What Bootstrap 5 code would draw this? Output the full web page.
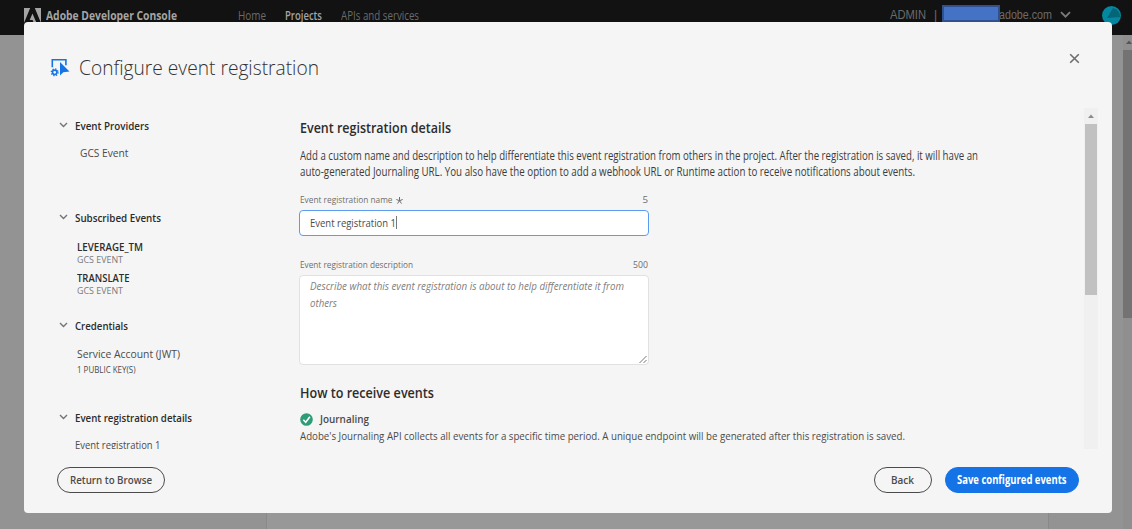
<!DOCTYPE html>
<html lang="en">
<head>
<meta charset="utf-8">
<title>Adobe Developer Console</title>
<link href="https://cdn.jsdelivr.net/npm/bootstrap@5.3.0/dist/css/bootstrap.min.css" rel="stylesheet">
<style>
body{font-family:"Open Sans","Noto Sans",sans-serif;font-size:12px;line-height:16px;background:#939393;color:#4b4b4b;height:529px;overflow:hidden;white-space:nowrap}
[data-w]{display:inline-block;transform-origin:0 50%}
.topbar{height:35px;background:#121212;color:#6b6b6b;padding-left:24px;line-height:18px}
.topbar .account{font-family:"Liberation Sans",sans-serif;font-size:12px}
.brand-name{color:#a5a5a5;font-weight:700;font-size:12px}
.redacted{width:58px;height:17px;background:#4472c4;border:2px solid #2f528f;margin:-1px -1px 0 0;position:relative;z-index:1}
.page-column{left:266px;top:35px;width:783px;bottom:0;background:#989898;border:solid #898989;border-width:0 1px}
.page-scroll{right:0;top:35px;width:9px;bottom:0;background:#8f8f8f}
.page-scroll i{display:block;height:268px;margin-top:5px;background:#737373}
.dialog{left:24px;top:22px;width:1087.5px;height:491px;background:#f5f5f5;border-radius:4px;z-index:2}
.dialog-head{height:86px;padding:31px 30.5px 0 26px}
.dialog-title{font-weight:300;font-size:21px;line-height:28px;color:#323232;margin:0}
.dialog-body{height:340.5px;overflow:hidden}
.steps{width:275.5px;padding:10px 0 0 34.5px;font-size:11px}
.step-head{font-weight:600;color:#2c2c2c;gap:7.5px;height:16px}
.evt{font-weight:600;color:#2c2c2c;line-height:14px}
.evt-sub{font-size:9px;line-height:12px;color:#7a7a7a}
.sec{font-size:14px;line-height:20px;font-weight:600;color:#2c2c2c;margin:0}
.intro{line-height:16.5px;color:#3c3c3c}
.lbl{font-size:9.8px;line-height:14px;color:#6e6e6e;width:348.5px}
.field{width:349.5px;margin-left:-.5px;border:1px solid #e1e1e1;border-radius:4px;background:#fff;padding:0 10px;font-size:11.5px}
.field.name-in{height:26px;border-color:#5c9cf0;color:#4b4b4b;padding-bottom:1px}
.field.desc-in{height:89.5px;padding-top:2px;line-height:16.5px;font-style:italic;color:#808080}
.caret{width:1px;height:13px;background:#777}
.inner-scroll{width:14px;background:#f0f0f0;margin-right:13.5px}
.inner-scroll i{display:block;width:12px;height:171px;margin:6px auto 0;background:#c1c1c1}
.dialog-foot{height:64px;padding:0 32.5px 1px 32.5px}
.pill{height:26px;border:1.5px solid #4b4b4b;border-radius:13px;color:#4b4b4b;font-size:11.5px;font-weight:600;line-height:20px;padding:0}
.pill.cta{background:#1473e6;border-color:#1473e6;color:#fff;font-weight:700}
</style>
</head>
<body class="position-relative">
<header class="topbar d-flex align-items-start">
  <svg width="17" height="15" viewBox="0 0 17 15" style="margin-top:8px"><path fill="#a5a5a5" d="M0 0h6.2L0 15zM10.800 0H17v15zM8.500 5.500l4 9.500H9.800l-1.200-3H5.700z"/></svg>
  <span class="brand-name" style="margin:7px 0 0 5px"><span data-w="131">Adobe Developer Console</span></span>
  <nav class="d-flex" style="margin:7px 0 0 61px;gap:19px"><span data-w="28">Home</span><span style="color:#a5a5a5;font-weight:600" data-w="37">Projects</span><span data-w="78">APIs and services</span></nav>
  <div class="account d-flex ms-auto" style="padding-top:6px;margin-right:11px">
    <span data-w="36">ADMIN</span><span style="margin:0 5px 0 8px">|</span><span class="redacted"></span><span data-w="53">adobe.com</span>
    <svg width="11" height="8" viewBox="0 0 11 8" style="margin:5px 31px 0 8px"><path d="M1 1.200l4.500 4.500L10 1.200" fill="none" stroke="#7b7b7b" stroke-width="1.800"/></svg>
    <svg width="19" height="19" viewBox="0 0 19 19"><circle cx="9.500" cy="9.500" r="9.500" fill="#0487a0"/><path d="M11 2L5 12l13 -1A9.500 9.500 0 0 0 11 2z" fill="#046577"/></svg>
  </div>
</header>
<div class="page-column position-absolute"></div>
<div class="page-scroll position-absolute"><svg class="d-block" width="9" height="10" viewBox="0 0 9 10"><path d="M3 9l3-3.500L9 9z" fill="#555"/></svg><i></i></div>

<main class="dialog position-absolute">
  <div class="dialog-head d-flex align-items-start">
    <svg width="20" height="20" viewBox="0 0 20 20" style="margin-top:5px"><path d="M2.300 9.200V1.800h13.600v5.500" fill="none" stroke="#1473e6" stroke-width="1.600"/><path d="M10 4v13.500l3.300-3.300 6.200-.7z" fill="#1473e6"/><circle cx="4.700" cy="14.300" r="2.200" fill="none" stroke="#1473e6" stroke-width="1.600"/><circle cx="4.700" cy="14.300" r="3.400" fill="none" stroke="#1473e6" stroke-width="1.300" stroke-dasharray="1.335"/></svg>
    <h1 class="dialog-title" style="margin-left:9px"><span data-w="240">Configure event registration</span></h1>
    <svg class="ms-auto" width="13" height="13" viewBox="0 0 13 13" style="margin-top:-1px"><path d="M2.200 2.200l8.600 8.600M10.800 2.200l-8.600 8.600" stroke="#6e6e6e" stroke-width="1.600"/></svg>
  </div>
  <div class="dialog-body d-flex">
    <aside class="steps flex-shrink-0">
      <div class="step-head d-flex"><svg width="9" height="6" viewBox="0 0 9 6" style="margin-top:4px"><path d="M1 1l3.500 3.500L8 1" fill="none" stroke="#747474" stroke-width="1.400"/></svg><span data-w="74">Event Providers</span></div>
      <div style="margin:11px 0 49px 21px"><span data-w="48.500">GCS Event</span></div>
      <div class="step-head d-flex"><svg width="9" height="6" viewBox="0 0 9 6" style="margin-top:4px"><path d="M1 1l3.500 3.500L8 1" fill="none" stroke="#747474" stroke-width="1.400"/></svg><span data-w="86">Subscribed Events</span></div>
      <div style="margin:14px 0 21px 18px">
        <div class="evt"><span data-w="66">LEVERAGE_TM</span></div><div class="evt-sub"><span data-w="46">GCS EVENT</span></div>
        <div class="evt" style="margin-top:5px"><span data-w="52.500">TRANSLATE</span></div><div class="evt-sub"><span data-w="46">GCS EVENT</span></div>
      </div>
      <div class="step-head d-flex"><svg width="9" height="6" viewBox="0 0 9 6" style="margin-top:4px"><path d="M1 1l3.500 3.500L8 1" fill="none" stroke="#747474" stroke-width="1.400"/></svg><span data-w="53">Credentials</span></div>
      <div style="margin:12px 0 32px 18px"><div><span data-w="103">Service Account (JWT)</span></div><div style="font-size:9.5px"><span data-w="58.500">1 PUBLIC KEY(S)</span></div></div>
      <div class="step-head d-flex"><svg width="9" height="6" viewBox="0 0 9 6" style="margin-top:4px"><path d="M1 1l3.500 3.500L8 1" fill="none" stroke="#747474" stroke-width="1.400"/></svg><span data-w="117">Event registration details</span></div>
      <div style="margin:11px 0 0 16px"><span data-w="85.500">Event registration 1</span></div>
    </aside>
    <section class="flex-grow-1" style="padding-top:10px;width:0">
      <h2 class="sec"><span data-w="151">Event registration details</span></h2>
      <div class="intro" style="margin-top:9.5px"><span data-w="678">Add a custom name and description to help differentiate this event registration from others in the project. After the registration is saved, it will have an</span><br><span data-w="615">auto-generated Journaling URL. You also have the option to add a webhook URL or Runtime action to receive notifications about events.</span></div>
      <div class="lbl d-flex" style="margin-top:12.5px"><span data-w="92.500">Event registration name</span><svg width="7" height="7" viewBox="0 0 7 7" style="margin:4px 0 0 4px"><path d="M3.500 0v3.700M.3 2.500l3.200 1.200 3.200-1.200M1.500 6.600l2-2.900 2 2.900" stroke="#6e6e6e" fill="none"/></svg><span class="ms-auto">5</span></div>
      <div class="field name-in d-flex align-items-center" style="margin-top:3px"><span data-w="86">Event registration 1</span><i class="caret"></i></div>
      <div class="lbl d-flex" style="margin-top:21.500px"><span data-w="113">Event registration description</span><span class="ms-auto"><span data-w="15">500</span></span></div>
      <div class="field desc-in position-relative" style="margin-top:3.500px"><span data-w="314">Describe what this event registration is about to help differentiate it from</span><br><span data-w="27">others</span>
        <svg class="position-absolute bottom-0 end-0" width="9" height="9" viewBox="0 0 9 9"><path d="M.5 8L7.500 1M4.500 8l3-3" stroke="#777"/></svg></div>
      <h2 class="sec" style="margin-top:18.500px"><span data-w="134">How to receive events</span></h2>
      <div class="d-flex align-items-center" style="margin-top:8px;font-weight:600;font-size:11.5px"><svg width="13" height="13" viewBox="0 0 13 13"><circle cx="6.500" cy="6.500" r="6.300" fill="#2d9d78"/><path d="M3.300 6.700l2.400 2.500 4.200-5.400" fill="none" stroke="#fff" stroke-width="1.600"/></svg><span style="margin-left:7px"><span data-w="49">Journaling</span></span></div>
      <div style="font-size:11.5px;margin-top:1px"><span data-w="605">Adobe's Journaling API collects all events for a specific time period. A unique endpoint will be generated after this registration is saved.</span></div>
    </section>
    <div class="inner-scroll flex-shrink-0"><svg class="d-block mx-auto" width="8" height="10" viewBox="0 0 8 10"><path d="M1 10l3-3.500L7 10z" fill="#8c8c8c"/></svg><i></i></div>
  </div>
  <footer class="dialog-foot d-flex align-items-center">
    <button class="btn pill d-flex align-items-center justify-content-center" style="width:108px"><span data-w="82">Return to Browse</span></button>
    <button class="btn pill d-flex align-items-center justify-content-center ms-auto" style="width:58px"><span data-w="23">Back</span></button>
    <button class="btn pill cta d-flex align-items-center justify-content-center" style="width:134.500px;margin-left:13px"><span data-w="109.500">Save configured events</span></button>
  </footer>
</main>
<script>
// Condense each label horizontally to its set width.
const labels = [...document.querySelectorAll('[data-w]')];
const natural = labels.map(el => el.getBoundingClientRect().width);
labels.forEach((el, i) => {
  const target = Number(el.dataset.w);
  el.style.transform = `scaleX(${target / natural[i]})`;
  el.style.marginRight = `${target - natural[i]}px`;
});
</script>
<script src="https://cdn.jsdelivr.net/npm/bootstrap@5.3.0/dist/js/bootstrap.bundle.min.js"></script>
</body>
</html>
